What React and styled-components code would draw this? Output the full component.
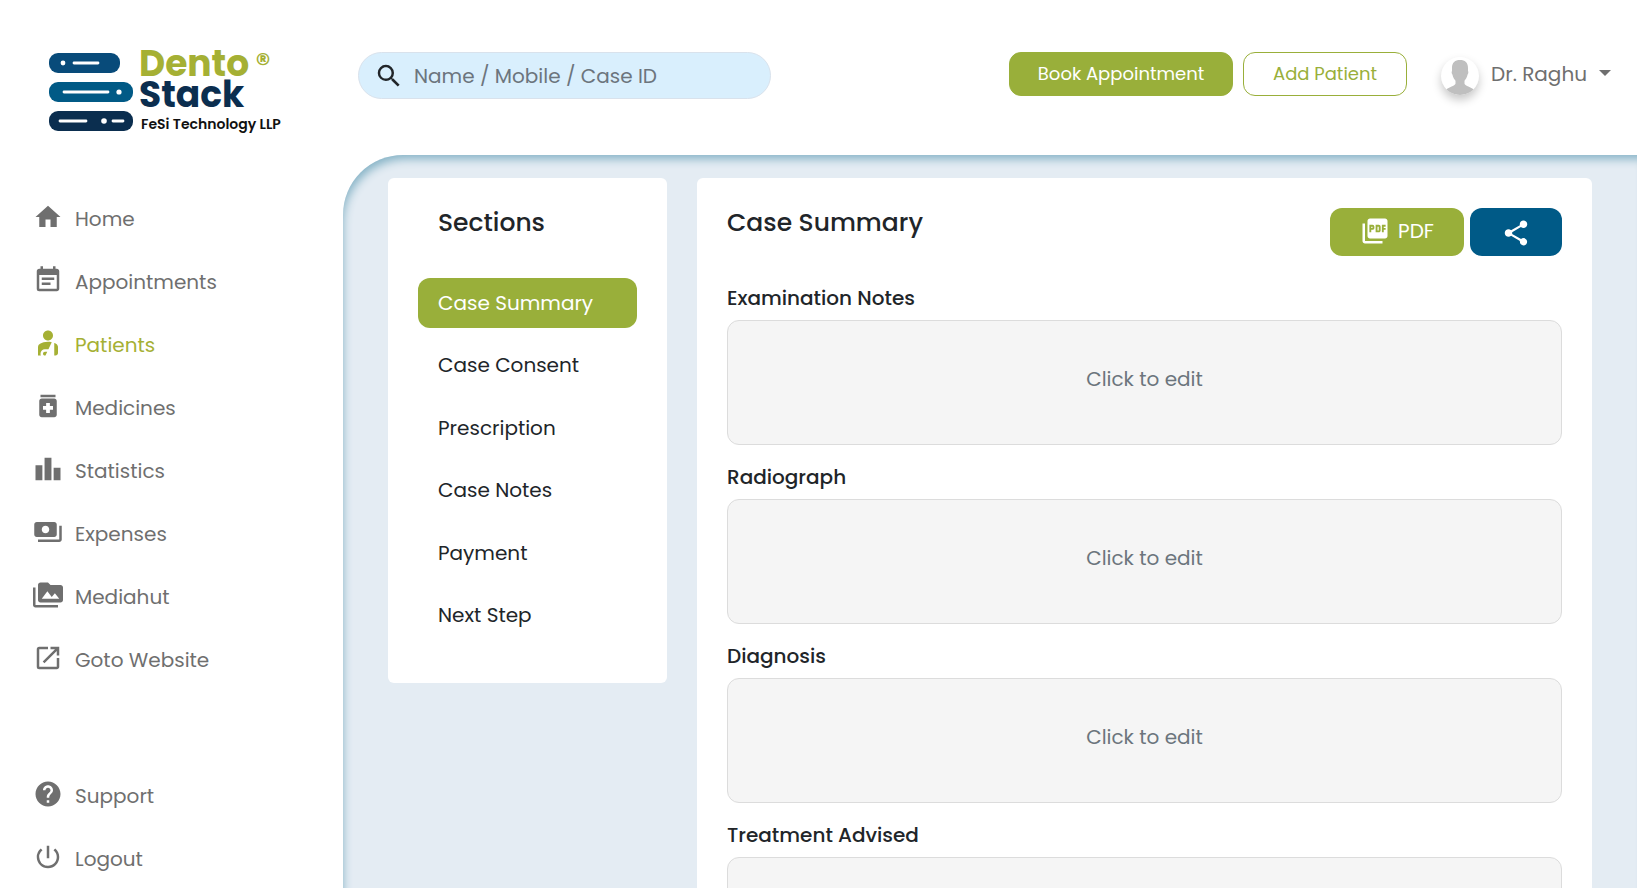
import React from "react";
import styled, { createGlobalStyle } from "styled-components";
import {
  MdHome,
  MdEventNote,
  MdPersonalInjury,
  MdMedication,
  MdLeaderboard,
  MdPayments,
  MdPermMedia,
  MdOpenInNew,
  MdHelp,
  MdPowerSettingsNew,
  MdSearch,
  MdPictureAsPdf,
  MdShare,
} from "react-icons/md";

const color = {
  green: "#99af3a",
  olive: "#a5b034",
  blue: "#005a87",
  ink: "#212529",
  grey: "#6f6f6f",
  muted: "#6c757d",
};

const GlobalStyle = createGlobalStyle`
  *, *::before, *::after { box-sizing: border-box; }
  body {
    margin: 0;
    background: #fff;
    color: ${color.ink};
    font-family: Poppins, Inter, "Liberation Sans", sans-serif;
    font-size: 20px;
    line-height: 30px;
  }
  h1, h2, ul { margin: 0; padding: 0; }
  ul { list-style: none; }
  a { color: inherit; text-decoration: none; }
  button, input { font: inherit; }
  button { cursor: pointer; }
`;

const Shell = styled.div`
  display: grid;
  grid-template-columns: 343px minmax(0, 1fr);
  height: 100vh;
  overflow: hidden;
`;

const Sidebar = styled.aside`
  display: flex;
  flex-direction: column;
  padding: 48px 33px 0;
`;

const Brand = styled.a`
  display: flex;
  gap: 6px;
  padding-left: 16px;
  height: 88px;
`;

const BrandMark = styled.svg`
  flex: none;
  width: 84px;
  height: 88px;
`;

const BrandText = styled.span`
  display: flex;
  flex-direction: column;
  font-weight: 700;
  font-size: 36px;
  line-height: 31px;
  color: #0b2e4f;
  white-space: nowrap;
`;

const BrandTop = styled.span`
  display: flex;
  gap: 6px;
  color: ${color.olive};
`;

const Registered = styled.span`
  font-size: 30px;
  font-weight: 500;
`;

const Tagline = styled.span`
  padding-left: 2px;
  font-size: 14px;
  line-height: 28px;
  font-weight: 600;
  color: #111;
`;

const NavList = styled.ul`
  display: flex;
  flex-direction: column;
  gap: 33px;
  padding-top: ${(p) => p.$top}px;
`;

const NavLink = styled.a`
  display: flex;
  align-items: center;
  gap: 12px;
  height: 30px;
  color: ${(p) => (p.$active ? color.olive : color.grey)};
  svg { flex: none; margin-bottom: 4px; }
`;

const Page = styled.div`
  display: grid;
  grid-template-rows: 155px minmax(0, 1fr);
`;

const Header = styled.header`
  display: flex;
  align-items: flex-start;
  gap: 10px;
  padding: 52px 26px 0 15px;
`;

const Search = styled.label`
  display: flex;
  align-items: center;
  gap: 10px;
  width: 413px;
  height: 47px;
  margin-right: auto;
  padding: 0 15px;
  border: 1px solid #d9e2ec;
  border-radius: 24px;
  background: #d9effd;
  svg { flex: none; }
`;

const SearchInput = styled.input`
  flex: 1;
  min-width: 0;
  padding: 0;
  border: 0;
  outline: 0;
  background: transparent;
  color: ${color.ink};
  &::placeholder { color: ${color.muted}; opacity: 1; }
`;

const HeaderButton = styled.button`
  height: 44px;
  width: ${(p) => (p.$outline ? 164 : 224)}px;
  padding: 0;
  border: 1px solid ${color.green};
  border-radius: 12px;
  background: ${(p) => (p.$outline ? "#fff" : color.green)};
  color: ${(p) => (p.$outline ? color.green : "#fff")};
  font-size: 18px;
  white-space: nowrap;
`;

const UserMenu = styled.button`
  display: flex;
  align-items: center;
  gap: 12px;
  margin-left: 24px;
  padding: 5px 0 0;
  border: 0;
  background: transparent;
  color: ${color.grey};
  white-space: nowrap;
`;

const Avatar = styled.svg`
  width: 38px;
  height: 38px;
  border-radius: 50%;
  background: #fff;
  box-shadow: 0 5px 10px rgba(0, 0, 0, 0.22);
`;

const UserName = styled.span`
  padding-bottom: 4px;
`;

const Caret = styled.span`
  margin-bottom: 6px;
  border: 6px solid transparent;
  border-top-color: ${color.grey};
  border-bottom: 0;
`;

const Main = styled.main`
  display: flex;
  align-items: flex-start;
  gap: 30px;
  padding: 23px 45px 0;
  overflow: hidden;
  border-top-left-radius: 60px;
  background: #e4ecf3;
  box-shadow: inset 4px 8px 10px -4px #86b3c6;
`;

const Card = styled.section`
  border-radius: 6px;
  background: #fff;
`;

const SectionsCard = styled(Card)`
  flex: none;
  width: 279px;
  padding: 28px 30px 43px;
`;

const CardTitle = styled.h1`
  font-size: 25px;
  line-height: 34px;
  font-weight: 500;
`;

const SectionsTitle = styled(CardTitle).attrs({ as: "h2" })`
  padding: 0 20px 38px;
`;

const SectionList = styled.ul`
  display: flex;
  flex-direction: column;
  justify-content: space-between;
  min-height: 362px;
`;

const SectionLink = styled.a`
  display: block;
  padding: 10px 20px;
  border-radius: 12px;
  background: ${(p) => (p.$active ? color.green : "transparent")};
  color: ${(p) => (p.$active ? "#fff" : color.ink)};
`;

const SummaryCard = styled(Card)`
  flex: 1;
  min-width: 0;
  padding: 28px 30px 30px;
`;

const SummaryHead = styled.div`
  display: flex;
  justify-content: space-between;
  align-items: flex-start;
  min-height: 77px;
`;

const Actions = styled.div`
  display: flex;
  gap: 6px;
  padding-top: 2px;
`;

const ActionButton = styled.button`
  display: flex;
  align-items: center;
  justify-content: center;
  gap: 8px;
  width: ${(p) => p.$width}px;
  height: 48px;
  padding: ${(p) => (p.$iconOnly ? "2px 0 0" : "0 0 2px")};
  border: 0;
  border-radius: 12px;
  background: ${(p) => p.$bg};
  color: #fff;
`;

const Field = styled.div`
  margin-bottom: 17px;
`;

const FieldLabel = styled.h2`
  padding-bottom: 7px;
  font-size: 20px;
  line-height: 30px;
  font-weight: 500;
`;

const EditBox = styled.button`
  display: flex;
  align-items: center;
  justify-content: center;
  width: 100%;
  height: 125px;
  padding: 0 0 8px;
  border: 1px solid #dcdcdc;
  border-radius: 12px;
  background: #f5f5f5;
  color: ${color.muted};
`;

const primaryNav = [
  ["Home", MdHome],
  ["Appointments", MdEventNote],
  ["Patients", MdPersonalInjury],
  ["Medicines", MdMedication],
  ["Statistics", MdLeaderboard],
  ["Expenses", MdPayments],
  ["Mediahut", MdPermMedia],
  ["Goto Website", MdOpenInNew],
];

const secondaryNav = [
  ["Support", MdHelp],
  ["Logout", MdPowerSettingsNew],
];

const sections = ["Case Summary", "Case Consent", "Prescription", "Case Notes", "Payment", "Next Step"];
const fields = ["Examination Notes", "Radiograph", "Diagnosis", "Treatment Advised"];

function Nav({ items, top, label }) {
  return (
    <nav aria-label={label}>
      <NavList $top={top}>
        {items.map(([text, Icon]) => (
          <li key={text}>
            <NavLink href="#" $active={text === "Patients"}>
              <Icon size={30} aria-hidden="true" />
              {text}
            </NavLink>
          </li>
        ))}
      </NavList>
    </nav>
  );
}

function Logo() {
  return (
    <Brand href="#">
      <BrandMark viewBox="0 0 84 88" aria-hidden="true">
        <rect y="5" width="71" height="20" rx="9" fill="#084b7a" />
        <rect y="34" width="84" height="20" rx="9" fill="#015a86" />
        <rect y="63" width="84" height="20" rx="9" fill="#0b2e4f" />
        <g stroke="#fff" strokeWidth="2.8" strokeLinecap="round">
          <path d="M25 15h24M15 44h44M11 73h26M64 73h10" />
        </g>
        <g fill="#fff">
          <circle cx="14" cy="15" r="2.4" />
          <circle cx="70" cy="44" r="2.6" />
          <circle cx="55" cy="73" r="2.8" />
        </g>
      </BrandMark>
      <BrandText>
        <BrandTop>
          Dento<Registered>®</Registered>
        </BrandTop>
        <span>Stack</span>
        <Tagline>FeSi Technology LLP</Tagline>
      </BrandText>
    </Brand>
  );
}

export default function App() {
  return (
    <>
      <GlobalStyle />
      <Shell>
        <Sidebar>
          <Logo />
          <Nav items={primaryNav} top={68} label="Main" />
          <Nav items={secondaryNav} top={106} label="Account" />
        </Sidebar>
        <Page>
          <Header>
            <Search>
              <MdSearch size={30} aria-hidden="true" />
              <SearchInput type="search" aria-label="Search" placeholder="Name / Mobile / Case ID" />
            </Search>
            <HeaderButton type="button">Book Appointment</HeaderButton>
            <HeaderButton type="button" $outline>
              Add Patient
            </HeaderButton>
            <UserMenu type="button">
              <Avatar viewBox="0 0 38 38" aria-hidden="true">
                <path
                  fill="#bfbfbf"
                  d="M19 3c-5 0-8 2.600-8 8v3c-.6.600-.4 2.800.4 3.600.6 3 1.900 4.800 3.100 6.100v3.100c-.8 2-6.500 3.600-9.500 5.900C8 36 13 38 19 38s11-2 14-5.300c-3-2.300-8.700-3.900-9.500-5.900v-3.100c1.200-1.300 2.500-3.100 3.100-6.100.8-.8 1-3 .4-3.600v-3c0-5.400-3-8-8-8z"
                />
              </Avatar>
              <UserName>Dr. Raghu</UserName>
              <Caret />
            </UserMenu>
          </Header>
          <Main>
            <SectionsCard>
              <SectionsTitle>Sections</SectionsTitle>
              <SectionList>
                {sections.map((name, i) => (
                  <li key={name}>
                    <SectionLink href="#" $active={i === 0}>
                      {name}
                    </SectionLink>
                  </li>
                ))}
              </SectionList>
            </SectionsCard>
            <SummaryCard>
              <SummaryHead>
                <CardTitle>Case Summary</CardTitle>
                <Actions>
                  <ActionButton type="button" $width={134} $bg={color.green}>
                    <MdPictureAsPdf size={30} aria-hidden="true" />
                    PDF
                  </ActionButton>
                  <ActionButton type="button" $width={92} $bg={color.blue} $iconOnly aria-label="Share">
                    <MdShare size={30} />
                  </ActionButton>
                </Actions>
              </SummaryHead>
              {fields.map((name) => (
                <Field key={name}>
                  <FieldLabel>{name}</FieldLabel>
                  <EditBox type="button">Click to edit</EditBox>
                </Field>
              ))}
            </SummaryCard>
          </Main>
        </Page>
      </Shell>
    </>
  );
}
